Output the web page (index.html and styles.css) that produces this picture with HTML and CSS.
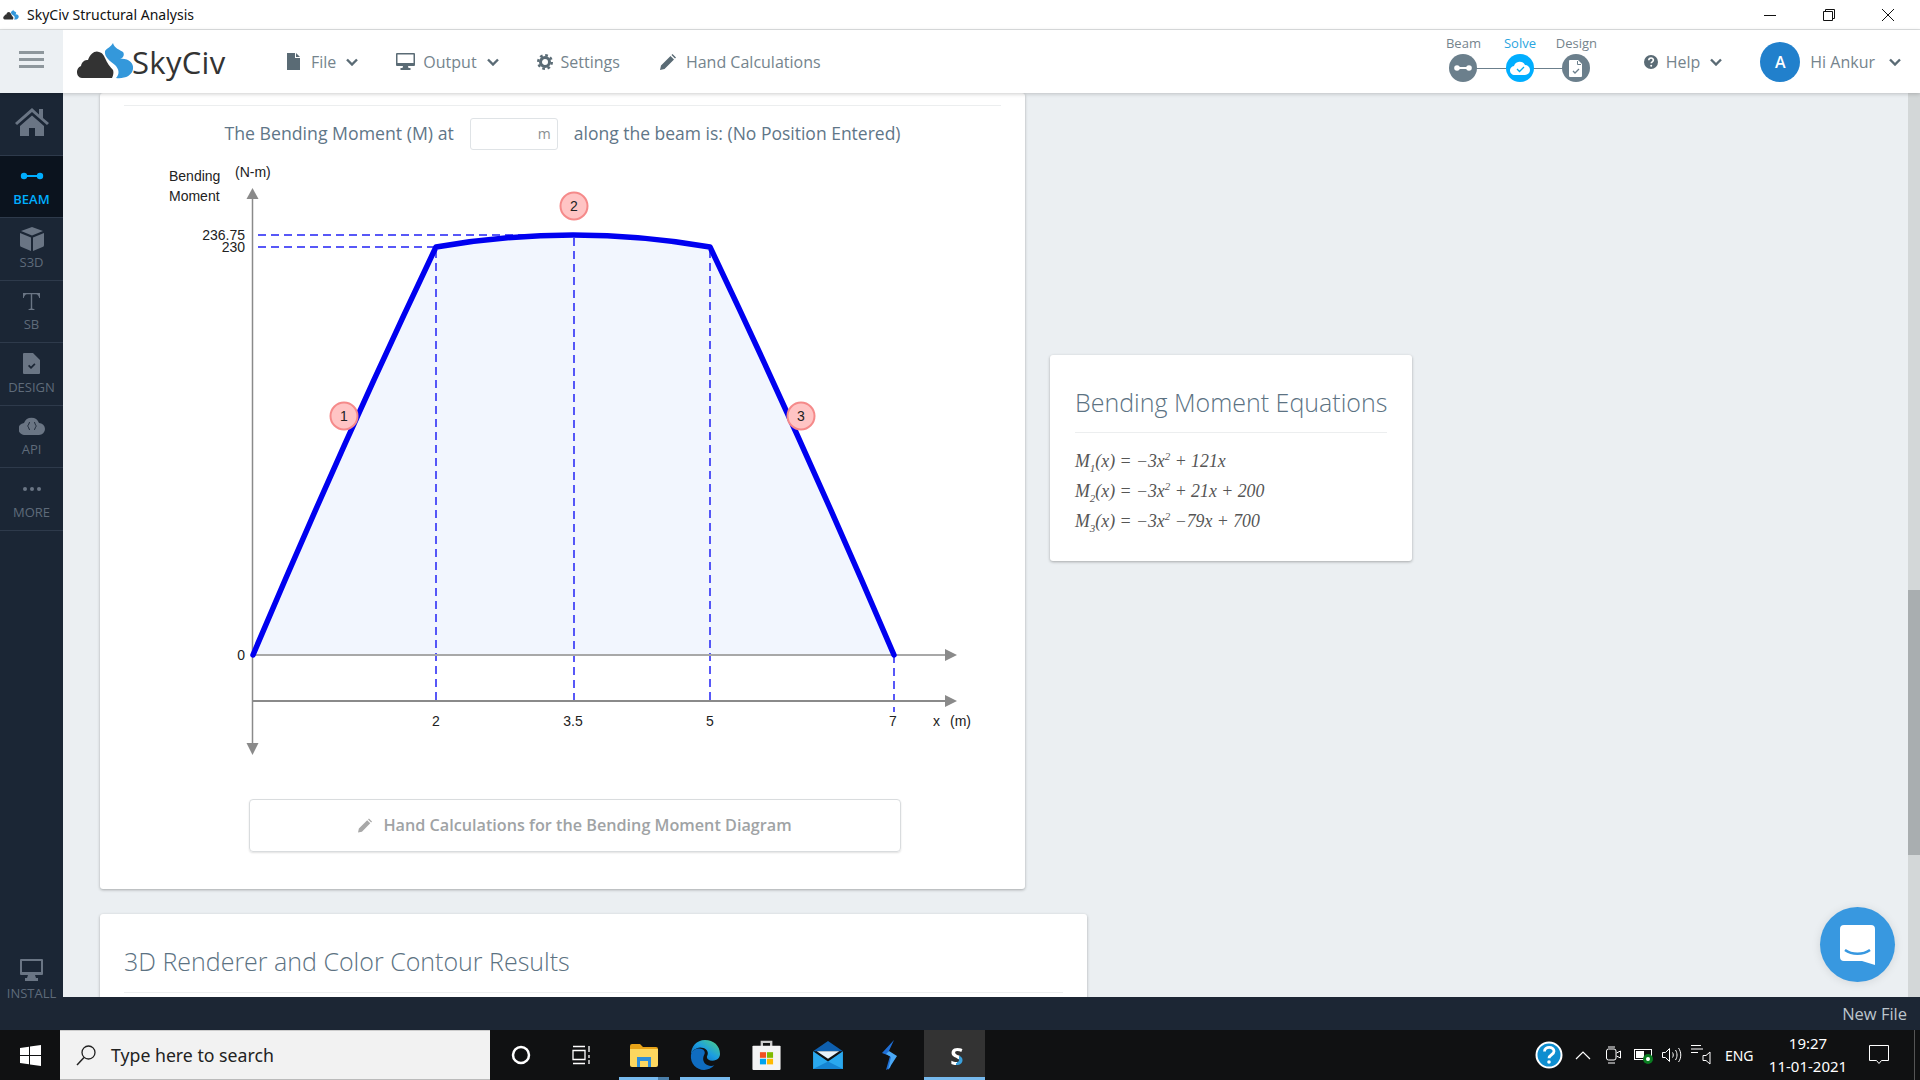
FILE: index.html

```html
<!DOCTYPE html>
<html lang="en">
<head>
    <meta charset="UTF-8">
    <title>SkyCiv Structural Analysis</title>
    <link rel="stylesheet" href="styles.css">
</head>
<body>
    <!-- Window title bar -->
    <div class="titlebar">
        <svg class="title-logo" width="16" height="12" viewBox="0 0 58 38"><path fill="#333" d="M6 35C0 35-1 25 5 23 6 18 9 17 12 17 14 10 20 7 23 9 27 10 28 13 29 15 31 20 34 24 37 27 38 30 37 33 36 35Z"/><path fill="#3498db" d="M37 0C38 5 44 7 47 9 49 12 47 15 44 16 52 15 58 20 57 26 56 33 48 36 40 35 44 31 43 26 39 22 34 18 28 14 29 8 31 5 35 4 37 0Z"/></svg>
        <span class="title-text">SkyCiv Structural Analysis</span>
        <div class="win-controls">
            <svg width="12" height="12" viewBox="0 0 12 12"><path d="M0 6.5h12" stroke="#111" fill="none"/></svg>
            <svg width="12" height="12" viewBox="0 0 12 12"><path d="M.5 2.500h9v9h-9zM2.500 2.500v-2h9v9h-2" stroke="#111" fill="none"/></svg>
            <svg width="12" height="12" viewBox="0 0 12 12"><path d="M0 0l12 12M12 0L0 12" stroke="#111" fill="none"/></svg>
        </div>
    </div>

    <!-- App header -->
    <header class="app-header">
        <div class="burger-cell">
            <span class="burger-bar"></span>
            <span class="burger-bar"></span>
            <span class="burger-bar"></span>
        </div>
        <div class="brand">
            <svg width="58" height="38" viewBox="0 0 58 38"><path fill="#333" d="M6 35C0 35-1 25 5 23 6 18 9 17 12 17 14 10 20 7 23 9 27 10 28 13 29 15 31 20 34 24 37 27 38 30 37 33 36 35Z"/><path fill="#3498db" d="M37 0C38 5 44 7 47 9 49 12 47 15 44 16 52 15 58 20 57 26 56 33 48 36 40 35 44 31 43 26 39 22 34 18 28 14 29 8 31 5 35 4 37 0Z"/></svg>
            <span class="brand-name">SkyCiv</span>
        </div>
        <nav class="main-nav">
            <a class="nav-item nav-file">
                <svg width="14" height="17" viewBox="0 0 14 17"><path class="ico" d="M0 0h8v5h5v12H0zM9 0l4 4H9z"/></svg>
                File
                <svg class="chev" width="12" height="8" viewBox="0 0 12 8"><path d="M1 1.500l5 5 5-5" stroke-width="2.400" fill="none" stroke="#5a6b75"/></svg>
            </a>
            <a class="nav-item nav-output">
                <svg width="19" height="17" viewBox="0 0 19 17"><path class="ico" fill-rule="evenodd" d="M1 0h17a1 1 0 011 1v11a1 1 0 01-1 1h-6l.5 2h2v2h-10v-2h2l.5-2H1a1 1 0 01-1-1V1a1 1 0 011-1zm.5 1.500v8.500h16V1.500z"/></svg>
                Output
                <svg class="chev" width="12" height="8" viewBox="0 0 12 8"><path d="M1 1.500l5 5 5-5" stroke-width="2.400" fill="none" stroke="#5a6b75"/></svg>
            </a>
            <a class="nav-item nav-settings">
                <svg width="16" height="16" viewBox="0 0 16 16"><circle cx="8" cy="8" r="4.500" fill="none" stroke="#5a6b75" stroke-width="3"/><circle cx="8" cy="8" r="6.800" fill="none" stroke="#5a6b75" stroke-width="2.400" stroke-dasharray="2.700 2.640"/></svg>
                Settings
            </a>
            <a class="nav-item nav-hand">
                <svg width="16" height="16" viewBox="0 0 16 16"><path class="ico" d="M0 16l1-4.500L10.500 2 14 5.500 4.500 15zM11.500 1l1-1 3.500 3.500-1 1z"/></svg>
                Hand Calculations
            </a>
        </nav>

        <div class="steps">
            <div class="step">
                <span class="step-label">Beam</span>
                <span class="step-dot">
                    <svg width="18" height="8" viewBox="0 0 18 8"><path d="M3 4h12" stroke="#fff" stroke-width="2"/><circle cx="3" cy="4" r="2.800" fill="#fff"/><circle cx="15" cy="4" r="2.800" fill="#fff"/></svg>
                </span>
            </div>
            <div class="step step-active">
                <span class="step-label">Solve</span>
                <span class="step-dot">
                    <svg width="20" height="14" viewBox="0 0 20 14"><path fill="#fff" d="M5 14a4.500 4.500 0 01-1-9 6 6 0 0111-1 5 5 0 010 10z"/><path d="M7 8l2.500 2.500L14 6" stroke="#00aeef" stroke-width="1.300" fill="none"/></svg>
                </span>
            </div>
            <div class="step">
                <span class="step-label">Design</span>
                <span class="step-dot">
                    <svg width="14" height="17" viewBox="0 0 14 17"><path fill="#fff" d="M1 0h8l4 4v12a1 1 0 01-1 1H1a1 1 0 01-1-1V1a1 1 0 011-1z"/><path d="M4 11l2 2 4-4" stroke="#6b7f8c" stroke-width="1.300" fill="none"/><path d="M8.500 1v3.500H12" stroke="#6b7f8c" fill="none"/></svg>
                </span>
            </div>
        </div>

        <a class="nav-item nav-help">
            <svg width="14" height="14" viewBox="0 0 14 14"><circle cx="7" cy="7" r="7" fill="#5a6b75"/><path d="M4.800 5.300c0-3 4.600-3 4.600-.2 0 1.700-2.200 1.700-2.200 3.200" stroke="#fff" stroke-width="1.600" fill="none"/><circle cx="7.200" cy="10.800" r="1" fill="#fff"/></svg>
            Help
            <svg class="chev" width="12" height="8" viewBox="0 0 12 8"><path d="M1 1.500l5 5 5-5" stroke-width="2.400" fill="none" stroke="#5a6b75"/></svg>
        </a>
        <div class="user">
            <span class="avatar">A</span>
            <span class="user-name">Hi Ankur</span>
            <svg class="chev" width="12" height="8" viewBox="0 0 12 8"><path d="M1 1.500l5 5 5-5" stroke-width="2.400" fill="none" stroke="#5a6b75"/></svg>
        </div>
    </header>

    <div class="main">
        <!-- Left product sidebar -->
        <aside class="sidebar">
            <a class="side-item side-home">
                <svg width="34" height="28" viewBox="0 0 34 28"><path class="side-ico" d="M17 0L0 15l2 2L17 4l15 13 2-2-6-5V1h-4v5.500zM5 18v10h9v-8h6v8h9V18L17 7.500z"/></svg>
            </a>
            <a class="side-item side-active">
                <svg width="24" height="8" viewBox="0 0 24 8"><path d="M4 4h16" stroke="#00aeff" stroke-width="2"/><circle cx="4" cy="4" r="3.200" fill="#00aeff"/><circle cx="20" cy="4" r="3.200" fill="#00aeff"/></svg>
                <span>BEAM</span>
            </a>
            <a class="side-item">
                <svg width="24" height="24" viewBox="0 0 24 24"><path class="side-ico" d="M12 0l11 4-11 4.500L1 4zM0 6l11 4.500V24L1.500 20a2 2 0 01-1.500-2zM24 6v12a2 2 0 01-1.500 2L13 24V10.500z"/></svg>
                <span>S3D</span>
            </a>
            <a class="side-item">
                <svg width="17" height="17" viewBox="0 0 17 17"><path class="side-ico" d="M0 0h17v5h-.8c-.4-2-1.500-3.800-3.200-3.800H9.200V15.500l2.300.7V17h-6v-.8l2.300-.7V1.200H4C2.300 1.200 1.200 3 .8 5H0z"/></svg>
                <span>SB</span>
            </a>
            <a class="side-item">
                <svg width="17" height="21" viewBox="0 0 17 21"><path class="side-ico" fill-rule="evenodd" d="M1 0h9l7 7v13a1 1 0 01-1 1H1a1 1 0 01-1-1V1a1 1 0 011-1zm4 13l3 3 4.500-4.500-1.200-1.200-3.300 3.300-1.800-1.800z"/></svg>
                <span>DESIGN</span>
            </a>
            <a class="side-item">
                <svg width="26" height="18" viewBox="0 0 26 18"><path class="side-ico" fill-rule="evenodd" d="M6 18a6 6 0 01-1-12 8 8 0 0115 0 6 6 0 010 12zM11 5c-2 0-1 3-3 4 2 1 1 4 3 4v-1c-1 0-.5-2-2-3 1.500-1 1-3 2-3zm4 0v1c1 0 .5 2 2 3-1.500 1-1 3-2 3v1c2 0 1-3 3-4-2-1-1-4-3-4z"/></svg>
                <span>API</span>
            </a>
            <a class="side-item">
                <svg width="18" height="4" viewBox="0 0 18 4"><circle class="side-ico" cx="2" cy="2" r="2"/><circle class="side-ico" cx="9" cy="2" r="2"/><circle class="side-ico" cx="16" cy="2" r="2"/></svg>
                <span>MORE</span>
            </a>
            <a class="side-item side-install">
                <svg width="23" height="22" viewBox="0 0 23 22"><path class="side-ico" fill-rule="evenodd" d="M1 0h21a1 1 0 011 1v14a1 1 0 01-1 1h-7l1 3h2v3H5v-3h2l1-3H1a1 1 0 01-1-1V1a1 1 0 011-1zm1 2v11h19V2z"/></svg>
                <span>INSTALL</span>
            </a>
        </aside>

        <section class="content">
            <div class="card-row">
                <div class="card card-diagram">
                    <div class="card-rule"></div>
                    <div class="position-row">
                        <span class="position-lead">The Bending Moment (M) at</span>
                        <span class="position-input">m</span>
                        <span class="position-tail">along the beam is: (No Position Entered)</span>
                    </div>

                    <!-- viewBox uses the same numbers as the page so points are easy to read off -->
                    <svg class="bmd" width="925" height="620" viewBox="100 150 925 620">
                        <path d="M253 655Q344 440 436 247Q573 223 710 247Q802 440 894 655Z" fill="#f2f6fe"/>

                        <g stroke="#2222f5" stroke-width="1.5" stroke-dasharray="8 5" fill="none">
                            <path d="M258 235H540"/>
                            <path d="M258 247H436"/>
                            <path d="M436 250V704"/>
                            <path d="M574 238V704"/>
                            <path d="M710 250V704"/>
                            <path d="M894 655V712"/>
                        </g>

                        <g stroke="#8a8a8a" stroke-width="1.5" fill="#8a8a8a">
                            <path d="M252.500 196V744" fill="none"/>
                            <path d="M252.500 188l6 11h-12z" stroke="none"/>
                            <path d="M252.500 755l6-12h-12z" stroke="none"/>
                            <path d="M253 701H946" fill="none" stroke-width="2"/>
                            <path d="M957 701l-12-6v12z" stroke="none"/>
                            <path d="M253 655H946" fill="none" stroke="#a8a8a8" stroke-width="2"/>
                            <path d="M957 655l-12-6v12z" stroke="none"/>
                        </g>

                        <path d="M253 655Q344 440 436 247Q573 223 710 247Q802 440 894 655" fill="none" stroke="#0000f0" stroke-width="5.5" stroke-linejoin="round" stroke-linecap="round"/>

                        <g class="bmd-text">
                            <text x="169" y="181">Bending</text>
                            <text x="169" y="201">Moment</text>
                            <text x="235" y="177">(N-m)</text>
                            <text x="245" y="240" text-anchor="end">236.75</text>
                            <text x="245" y="252" text-anchor="end">230</text>
                            <text x="245" y="660" text-anchor="end">0</text>
                            <text x="436" y="726" text-anchor="middle">2</text>
                            <text x="573" y="726" text-anchor="middle">3.5</text>
                            <text x="710" y="726" text-anchor="middle">5</text>
                            <text x="893" y="726" text-anchor="middle">7</text>
                            <text x="933" y="726">x</text>
                            <text x="950" y="726">(m)</text>
                        </g>

                        <g class="bmd-marker">
                            <circle cx="344" cy="416" r="13.5"/>
                            <circle cx="574" cy="206" r="13.5"/>
                            <circle cx="801" cy="416" r="13.5"/>
                        </g>
                        <g class="bmd-text" text-anchor="middle">
                            <text x="344" y="421">1</text>
                            <text x="574" y="211">2</text>
                            <text x="801" y="421">3</text>
                        </g>
                    </svg>

                    <a class="hand-btn">
                        <svg width="14" height="15" viewBox="0 0 16 16"><path fill="#a8a8a8" d="M0 16l1-4.500L10.500 2 14 5.500 4.500 15zM11.500 1l1-1 3.500 3.500-1 1z"/></svg>
                        Hand Calculations for the Bending Moment Diagram
                    </a>
                </div>

                <div class="card card-equations">
                    <h3 class="card-title">Bending Moment Equations</h3>
                    <div class="equations">
                        <div>M<sub>1</sub>(x) = −3x<sup>2</sup> + 121x</div>
                        <div>M<sub>2</sub>(x) = −3x<sup>2</sup> + 21x + 200</div>
                        <div>M<sub>3</sub>(x) = −3x<sup>2</sup> −79x + 700</div>
                    </div>
                </div>
            </div>

            <div class="card card-render">
                <h3 class="card-title">3D Renderer and Color Contour Results</h3>
            </div>

            <!-- Chat launcher -->
            <a class="chat-btn">
                <svg width="35" height="40" viewBox="0 0 35 40"><path fill="#fff" d="M4 0h27a4 4 0 014 4v36l-13-4H4a4 4 0 01-4-4V4a4 4 0 014-4z"/><path d="M5 25c7 5 18 5 25 0" stroke="#3898e0" stroke-width="2.5" fill="none"/></svg>
            </a>
        </section>

        <div class="scrollbar"><div class="scroll-thumb"></div></div>
    </div>

    <div class="statusbar">New File</div>

    <!-- Windows taskbar -->
    <footer class="taskbar">
        <div class="task-start">
            <svg width="21" height="21" viewBox="0 0 21 21"><path fill="#fff" d="M0 3l9-1.300V10H0zM10 1.500L21 0v10H10zM0 11h9v8.300L0 18zM10 11h11v10l-11-1.500z"/></svg>
        </div>
        <div class="task-search">
            <svg width="22" height="22" viewBox="0 0 22 22"><circle cx="13.5" cy="8.5" r="6.5" fill="none" stroke="#222" stroke-width="1.300"/><path d="M9 13.500L2 21" stroke="#222" stroke-width="1.500"/></svg>
            <span>Type here to search</span>
        </div>
        <div class="task-icon"><svg width="20" height="20" viewBox="0 0 20 20"><circle cx="10" cy="10" r="8" fill="none" stroke="#fff" stroke-width="2.500"/></svg></div>
        <div class="task-icon"><svg width="20" height="20" viewBox="0 0 20 20"><path d="M1 1.500h12M1 18.500h12M1 5.500h12v9H1zM17 1v6M17 10v3M17 15v4" fill="none" stroke="#fff" stroke-width="1.300"/></svg></div>
        <div class="task-icon task-open task-files"><svg width="28" height="23" viewBox="0 0 28 23"><path fill="#e8a317" d="M0 2a2 2 0 012-2h8l3 3h13a2 2 0 012 2v4H0z"/><path fill="#fcd75f" d="M0 5h28v16a2 2 0 01-2 2H2a2 2 0 01-2-2z"/><path fill="#2f8fd8" d="M7 13h14v10h-3v-6h-8v6H7z"/></svg></div>
        <div class="task-icon task-open">
            <svg width="30" height="30" viewBox="0 0 32 32">
                <defs><linearGradient id="edgeGrad" x1="0" y1="1" x2="1" y2="0"><stop offset="0" stop-color="#0b5cad"/><stop offset="0.5" stop-color="#1b9de2"/><stop offset="1" stop-color="#52d67e"/></linearGradient></defs>
                <path fill="url(#edgeGrad)" d="M16 0c9 0 16 6 16 15 0 4-3 7-8 7-4 0-6-2-6-4 0-1 1-2 1-4 0-3-3-6-8-6C6 8 2 12 1 16 1 7 7 0 16 0z"/>
                <path fill="#0f6cc0" d="M1 16c1-5 5-7 9-7 5 0 7 4 5 7-2 4-1 9 4 11 2 1 5 1 7 0-3 3-7 5-11 5C7 32 0 25 1 16z"/>
            </svg>
        </div>
        <div class="task-icon">
            <svg width="29" height="30" viewBox="0 0 30 32"><path d="M10 7V2h10v5" fill="none" stroke="#ccc" stroke-width="2.5"/><rect y="6" width="30" height="26" rx="1" fill="#f4f4f4"/><rect x="8" y="13" width="6.5" height="6" fill="#f25022"/><rect x="15.5" y="13" width="6.5" height="6" fill="#7fba00"/><rect x="8" y="20" width="6.5" height="6" fill="#00a4ef"/><rect x="15.5" y="20" width="6.5" height="6" fill="#ffb900"/></svg>
        </div>
        <div class="task-icon">
            <svg width="30" height="28" viewBox="0 0 32 30"><path fill="#0e5fae" d="M16 0l16 11H0z"/><path fill="#e8f2fa" d="M4 11h24L16 19z"/><path fill="#2aa8ee" d="M0 11l16 11 16-11v19H0z"/><path fill="#1584d2" d="M16 22l16 8H0z"/></svg>
        </div>
        <div class="task-icon">
            <svg width="15" height="30" viewBox="0 0 15 30"><path fill="#1f6fd6" d="M12 0L0 13l8 3-4 14 4-2 3-11-5-4z"/><path fill="#4aa8f5" d="M7 11l8 5-9 14 3-13-5-3z"/></svg>
        </div>
        <div class="task-icon task-current"><span class="task-s">S</span></div>

        <div class="tray">
            <svg width="28" height="28" viewBox="0 0 28 28"><circle cx="14" cy="14" r="12.5" fill="#0e8ed0" stroke="#fff" stroke-width="2"/><path d="M9.500 10.500c0-5.500 9.500-5.500 9.500-.2 0 3.700-5 3.200-5 7" stroke="#fff" stroke-width="2.8" fill="none"/><circle cx="14" cy="21" r="1.8" fill="#fff"/></svg>
            <svg class="tray-caret" width="16" height="10" viewBox="0 0 16 10"><path d="M1 9l7-7 7 7" fill="none" stroke="#fff" stroke-width="1.200"/></svg>
            <svg class="tray-meet" width="15" height="18" viewBox="0 0 15 18"><rect x=".5" y="3" width="9.500" height="11" rx="2" fill="none" stroke="#fff"/><path d="M10.500 7l4-2v7l-4-2M2 1h7M2 17h7" fill="none" stroke="#fff"/></svg>
            <svg class="tray-battery" width="19" height="18" viewBox="0 0 19 18"><rect x=".5" y="3.500" width="17" height="10" fill="none" stroke="#fff"/><rect x="2" y="5" width="8" height="7" fill="#fff"/><circle cx="14" cy="13" r="5" fill="#0a7d21"/><circle cx="14" cy="13" r="2" fill="#fff"/></svg>
            <svg class="tray-sound" width="20" height="16" viewBox="0 0 20 16"><path d="M.5 5.500h3l4-4v13l-4-4h-3zM10.500 5.500c1 1.500 1 3.500 0 5M13.500 3c2 3 2 7 0 10M16.500 1c3 4 3 10 0 14" fill="none" stroke="#fff"/></svg>
            <svg class="tray-ime" width="20" height="20" viewBox="0 0 20 20"><path d="M0 .5h10M0 4h12M0 7.500h7M12 10.500h3l4-3.500v12l-4-3.500h-3z" fill="none" stroke="#fff"/></svg>
            <span class="tray-lang">ENG</span>
            <div class="tray-clock">
                <div>19:27</div>
                <div>11-01-2021</div>
            </div>
            <svg class="tray-notify" width="20" height="20" viewBox="0 0 20 20"><path d="M.5.500h19v15h-7l-2.500 3-2.500-3h-7z" fill="none" stroke="#fff"/></svg>
            <span class="tray-desktop"></span>
        </div>
    </footer>
</body>
</html>
```

FILE: styles.css

```css
/* Reset and base */
* {
    margin: 0;
    padding: 0;
    box-sizing: border-box;
}

body {
    display: flex;
    flex-direction: column;
    height: 100vh;
    overflow: hidden;
    font-family: 'Open Sans', 'Noto Sans', sans-serif;
    background: #ebeff2;
}

svg {
    flex: none;
}

/* Window title bar */
.titlebar {
    display: flex;
    align-items: center;
    height: 30px;
    padding-left: 3px;
    background: #fff;
    border-bottom: 1px solid #dfe1e2;
}

.title-text {
    margin-left: 8px;
    font-family: 'Noto Sans', sans-serif;
    font-size: 14px;
    color: #111;
}

.win-controls {
    display: flex;
    gap: 47px;
    margin-left: auto;
    margin-right: 26px;
}

/* App header */
.app-header {
    position: relative;
    z-index: 2;
    display: flex;
    align-items: center;
    height: 63px;
    background: #fff;
    box-shadow: 0 1px 4px rgba(0, 0, 0, 0.2);
}

.burger-cell {
    display: flex;
    flex-direction: column;
    justify-content: center;
    gap: 4px;
    width: 63px;
    height: 100%;
    padding: 0 19px 4px;
    background: #ecf0f3;
}

.burger-bar {
    height: 3px;
    background: #8e979c;
}

.brand {
    display: flex;
    align-items: center;
    width: 208px;
    padding-left: 13px;
}

.brand-name {
    margin-left: -2px;
    font-size: 31px;
    letter-spacing: 0.3px;
    color: #333;
}

.main-nav {
    display: flex;
    align-items: center;
    margin-left: 16px;
}

.nav-item {
    display: flex;
    align-items: center;
    font-size: 16px;
    color: #75848d;
}

.ico {
    fill: #5a6b75;
}

.nav-file svg:first-child { margin-right: 10px; }
.nav-file .chev { margin-left: 10px; }
.nav-output { margin-left: 38px; }
.nav-output svg:first-child { margin-right: 8px; }
.nav-output .chev { margin-left: 10px; }
.nav-settings { margin-left: 38px; }
.nav-settings svg { margin-right: 8px; }
.nav-hand { margin-left: 40px; }
.nav-hand svg { margin-right: 10px; }

/* Beam / Solve / Design stepper */
.steps {
    display: flex;
    align-self: flex-start;
    margin: 4px 39px 0 auto;
}

.step {
    position: relative;
    display: flex;
    flex-direction: column;
    align-items: center;
    gap: 2px;
    width: 56.5px;
}

.step + .step::before {
    content: '';
    position: absolute;
    top: 33.5px;
    right: 28px;
    width: 56.5px;
    height: 1.5px;
    background: #6b7f8c;
}

.step-label {
    font-size: 13px;
    line-height: 18px;
    color: #75848d;
}

.step-dot {
    position: relative;
    z-index: 1;
    display: flex;
    align-items: center;
    justify-content: center;
    width: 28px;
    height: 28px;
    border-radius: 50%;
    background: #6b7f8c;
}

.step-active .step-label {
    color: #2aa5e0;
}

.step-active .step-dot {
    background: #00aeff;
}

.nav-help {
    gap: 8px;
}

.nav-help .chev {
    margin-left: 2px;
}

.user {
    display: flex;
    align-items: center;
    margin-left: 38px;
    margin-right: 19px;
}

.avatar {
    display: flex;
    align-items: center;
    justify-content: center;
    width: 40px;
    height: 40px;
    border-radius: 50%;
    background: #2180cc;
    color: #fff;
    font-size: 16px;
    font-weight: 600;
}

.user-name {
    margin: 0 14px 0 10px;
    font-size: 16px;
    color: #75848d;
}

/* Main area */
.main {
    position: relative;
    z-index: 1;
    flex: 1;
    display: flex;
    min-height: 0;
}

.sidebar {
    display: flex;
    flex-direction: column;
    flex: none;
    width: 63px;
    background: #1b2635;
}

.side-item {
    display: grid;
    grid-template-rows: 30px 16px;
    align-content: end;
    align-items: center;
    justify-items: center;
    height: 62.5px;
    padding-bottom: 10px;
    border-bottom: 1px solid #2e3a4b;
    font-size: 13px;
    line-height: 16px;
    color: #5f6b7a;
}

.side-ico {
    fill: #6a7584;
}

.side-home {
    grid-template-rows: 58px;
    padding-bottom: 4px;
    align-content: center;
}

.side-active {
    background: #0b131e;
    color: #00aeff;
    font-weight: 600;
}

.side-install {
    margin-top: auto;
    height: 46px;
    padding: 4px 0 0;
    align-content: start;
    border-bottom: 0;
}

.content {
    position: relative;
    flex: 1;
    min-width: 0;
    padding-left: 37px;
    overflow: hidden;
}

.card-row {
    display: flex;
    align-items: flex-start;
    gap: 25px;
}

.card {
    background: #fff;
    border-radius: 3px;
    box-shadow: 0 1px 3px rgba(0, 0, 0, 0.3);
}

.card-diagram {
    flex: none;
    width: 925px;
    height: 796px;
    padding-top: 12px;
}

.card-rule {
    height: 1px;
    margin: 0 24px;
    background: #eceeef;
}

.position-row {
    display: flex;
    align-items: center;
    justify-content: center;
    gap: 16px;
    height: 32px;
    margin-top: 12px;
    font-size: 17.5px;
    color: #5f7688;
}

.position-lead {
    padding-bottom: 2px;
    font-size: 17.7px;
}

.position-tail {
    padding-bottom: 2px;
}

.position-input {
    width: 88px;
    height: 32px;
    padding-right: 6px;
    border: 1px solid #dfe3e6;
    border-radius: 3px;
    font-size: 14px;
    line-height: 30px;
    text-align: right;
    color: #8b8f92;
}

.bmd {
    display: block;
}

.bmd-text {
    font-family: 'Liberation Sans', Arial, sans-serif;
    font-size: 14px;
    fill: #222;
}

.bmd-marker circle {
    fill: #ffc4c4;
    stroke: #f58a8a;
    stroke-width: 2;
}

.hand-btn {
    display: flex;
    align-items: center;
    justify-content: center;
    gap: 11px;
    width: 652px;
    height: 53px;
    padding-bottom: 1px;
    margin: 29px 0 0 149px;
    border: 1px solid #d9dcde;
    border-radius: 4px;
    box-shadow: 0 1px 2px rgba(0, 0, 0, 0.12);
    font-size: 16.2px;
    font-weight: 600;
    color: #a0a3a5;
}

.card-equations {
    flex: none;
    width: 362px;
    height: 206px;
    margin-top: 262px;
    padding: 0 25px;
}

.card-title {
    padding: 30px 0 13px;
    border-bottom: 1px solid #eceeef;
    font-size: 25px;
    font-weight: 300;
    line-height: 34px;
    white-space: nowrap;
    color: #5c7282;
}

.equations {
    margin-top: 13px;
    font-family: 'Liberation Serif', 'Times New Roman', serif;
    font-style: italic;
    font-size: 17.8px;
    line-height: 30px;
    color: #555;
}

.equations sub,
.equations sup {
    font-size: 11px;
    line-height: 0;
}

.card-render {
    width: 987px;
    height: 110px;
    margin-top: 25px;
    padding: 0 24px;
}

.card-render .card-title {
    padding: 30px 0 14px;
}

.chat-btn {
    position: absolute;
    right: 13px;
    bottom: 15px;
    display: flex;
    align-items: center;
    justify-content: center;
    width: 75px;
    height: 75px;
    border-radius: 50%;
    background: #3898e0;
    box-shadow: 0 1px 10px rgba(0, 0, 0, 0.1);
}

.scrollbar {
    flex: none;
    width: 12px;
    padding-top: 497px;
    background: #d3d7d8;
}

.scroll-thumb {
    height: 265px;
    background: #a9aeb0;
}

.statusbar {
    height: 33px;
    padding-right: 13px;
    background: #1c2634;
    font-size: 16.5px;
    line-height: 33px;
    text-align: right;
    color: #bcc5cc;
}

/* Windows taskbar */
.taskbar {
    display: flex;
    align-items: center;
    height: 50px;
    background: #101112;
    color: #fff;
    font-family: 'Noto Sans', sans-serif;
}

.task-start {
    display: flex;
    align-items: center;
    justify-content: center;
    width: 60px;
    height: 100%;
}

.task-search {
    display: flex;
    align-items: center;
    gap: 14px;
    width: 430px;
    height: 100%;
    padding-left: 15px;
    background: #f2f2f2;
    border-top: 1px solid #ccc;
    border-bottom: 1px solid #bbb;
    font-size: 17.7px;
    color: #222;
}

.task-icon {
    display: flex;
    align-items: center;
    justify-content: center;
    width: 61.5px;
    height: 100%;
}

.task-open {
    background: linear-gradient(#76b9ed, #76b9ed) center bottom / 50px 3px no-repeat;
}

.task-files {
    background: linear-gradient(to right, #76b9ed 39px, #4a7ea8 39px) center bottom / 50px 3px no-repeat;
}

.task-current {
    margin-left: 3px;
    padding-left: 5px;
    background: #333 linear-gradient(#76b9ed, #76b9ed) center bottom / 100% 3px no-repeat;
}

.task-s {
    font-size: 24px;
    font-weight: 700;
    background: linear-gradient(115deg, #fff 62%, #3aa0dc 62%);
    -webkit-background-clip: text;
    background-clip: text;
    color: transparent;
}

.tray {
    display: flex;
    align-items: center;
    height: 100%;
    margin-left: auto;
    padding-right: 5px;
}

.tray-caret { margin-left: 12px; }
.tray-meet { margin-left: 15.5px; }
.tray-battery { margin-left: 12.5px; }
.tray-sound { margin-left: 9.5px; }
.tray-ime { margin-left: 9px; }

.tray-lang {
    margin-left: 13.5px;
    font-size: 14px;
}

.tray-clock {
    width: 80px;
    margin-left: 14.5px;
    font-size: 15px;
    line-height: 23px;
    text-align: center;
}

.tray-notify {
    margin-left: 21px;
}

.tray-desktop {
    width: 1px;
    height: 100%;
    margin-left: 25px;
    background: #555;
}
```
